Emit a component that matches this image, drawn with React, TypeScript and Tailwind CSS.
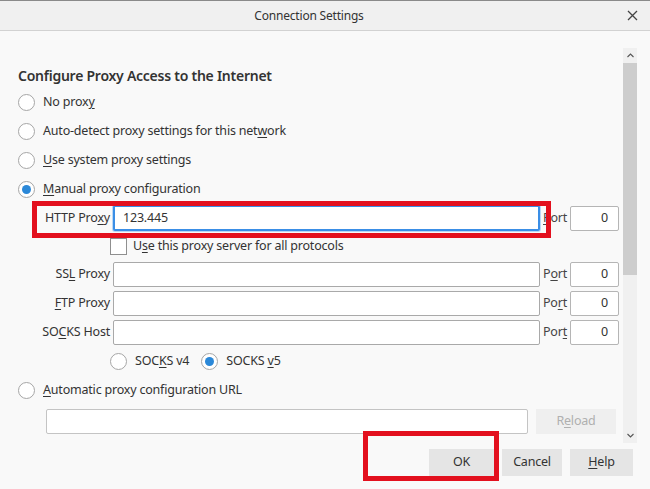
import React from 'react';

const font = { fontFamily: '"Noto Sans", "Open Sans", sans-serif' };

const Radio: React.FC<{ checked?: boolean }> = ({ checked }) => (
    <span className="flex h-[17px] w-[17px] shrink-0 items-center justify-center rounded-full border border-[#a6a6a6] bg-white">
        {checked && <span className="h-[9px] w-[9px] rounded-full bg-[#2b88d8]" />}
    </span>
);

const RadioRow: React.FC<{ checked?: boolean; children: React.ReactNode }> = ({ checked, children }) => (
    <div className="flex h-[29px] items-center gap-[8px]">
        <Radio checked={checked} />
        <span>{children}</span>
    </div>
);

const ProxyRow: React.FC<{ label: React.ReactNode; port: React.ReactNode; value?: string; focused?: boolean; className?: string }> = ({ label, port, value, focused, className }) => (
    <div className={`flex h-[25px] items-center ${className || ''}`}>
        <div className="w-[92px] text-right">{label}</div>
        <div
            className={
                focused
                    ? 'ml-[3px] flex h-[26px] w-[427px] items-center rounded-[2px] border-2 border-[#3a8ee6] bg-white pl-[8px] shadow-[0_0_0_1px_#b9d7f5]'
                    : 'ml-[3px] h-[25px] w-[427px] rounded-[2px] border border-[#a9a9a9] bg-white'
            }
        >
            {value}
        </div>
        <div className="w-[30px] pl-[3px] text-[#444]">{port}</div>
        <div className="flex h-[25px] w-[49px] items-center justify-end rounded-[2px] border border-[#b5b5b5] bg-white pr-[10px]">0</div>
    </div>
);

const App: React.FC = () => {
    return (
        <div className="relative flex h-[489px] w-[650px] flex-col overflow-hidden bg-[#f9f9f9] text-[12.5px] tracking-[-0.2px] text-[#333]" style={font}>
            {/* title bar */}
            <div className="flex h-[31px] shrink-0 items-center border-t border-b border-t-[#8a8a8a] border-b-[#d2d2d2] bg-[#f0f0f0]">
                <div className="flex-1 text-center text-[12px] text-[#333]">Connection Settings</div>
                <div className="flex w-[32px] items-center justify-center pr-[4px]">
                    <svg width="11" height="11" viewBox="0 0 11 11">
                        <path d="M1 1 L10 10 M10 1 L1 10" stroke="#444" strokeWidth="1.3" />
                    </svg>
                </div>
            </div>

            {/* scroll area */}
            <div className="flex h-[414px] shrink-0">
                <div className="flex-1 pl-[18px]">
                    <div className="mt-[35px] h-[20px] text-[14px] font-semibold leading-[20px] tracking-[-0.25px] text-[#333]">
                        Configure Proxy Access to the Internet
                    </div>
                    <div className="mt-[2px]">
                        <RadioRow>No prox<u className="underline-offset-2">y</u></RadioRow>
                        <RadioRow>Auto-detect proxy settings for this net<u className="underline-offset-2">w</u>ork</RadioRow>
                        <RadioRow><u className="underline-offset-2">U</u>se system proxy settings</RadioRow>
                        <RadioRow checked><u className="underline-offset-2">M</u>anual proxy configuration</RadioRow>
                    </div>

                    <ProxyRow
                        className="mt-[1px] h-[26px]"
                        focused
                        value="123.445"
                        label={<>HTTP Pro<u className="underline-offset-2">x</u>y</>}
                        port={<><u className="underline-offset-2">P</u>ort</>}
                    />

                    <div className="mt-[7px] flex h-[17px] items-center">
                        <span className="ml-[92px] h-[17px] w-[17px] border border-[#8f8f8f] bg-white" />
                        <span className="ml-[6px]">U<u className="underline-offset-2">s</u>e this proxy server for all protocols</span>
                    </div>

                    <ProxyRow
                        className="mt-[7px]"
                        label={<>SS<u className="underline-offset-2">L</u> Proxy</>}
                        port={<>P<u className="underline-offset-2">o</u>rt</>}
                    />
                    <ProxyRow
                        className="mt-[4px]"
                        label={<><u className="underline-offset-2">F</u>TP Proxy</>}
                        port={<>Po<u className="underline-offset-2">r</u>t</>}
                    />
                    <ProxyRow
                        className="mt-[4px]"
                        label={<>SO<u className="underline-offset-2">C</u>KS Host</>}
                        port={<>Por<u className="underline-offset-2">t</u></>}
                    />

                    <div className="mt-[8px] flex h-[17px] items-center">
                        <div className="ml-[92px] flex items-center gap-[8px]">
                            <Radio />
                            <span>SOC<u className="underline-offset-2">K</u>S v4</span>
                        </div>
                        <div className="ml-[12px] flex items-center gap-[8px]">
                            <Radio checked />
                            <span>SOCKS <u className="underline-offset-2">v</u>5</span>
                        </div>
                    </div>

                    <div className="mt-[12px] flex h-[17px] items-center gap-[8px]">
                        <Radio />
                        <span><u className="underline-offset-2">A</u>utomatic proxy configuration URL</span>
                    </div>

                    <div className="mt-[10px] flex h-[25px]">
                        <div className="ml-[28px] w-[482px] rounded-[2px] border border-[#c4c4c4] bg-white" />
                        <div className="ml-[8px] flex w-[80px] items-center justify-center bg-[#efefef] text-[#b0b0b0]">
                            R<u className="underline-offset-2">e</u>load
                        </div>
                    </div>
                </div>

                {/* scrollbar */}
                <div className="mr-[13px] mt-[17px] flex h-[395px] w-[14px] flex-col bg-[#f0f0f0]">
                    <div className="flex h-[15px] items-center justify-center">
                        <svg width="7" height="5" viewBox="0 0 7 5">
                            <path d="M0.5 4 L3.5 1 L6.5 4" stroke="#555" strokeWidth="1.1" fill="none" />
                        </svg>
                    </div>
                    <div className="h-[212px] bg-[#cdcdcd]" />
                    <div className="flex-1" />
                    <div className="flex h-[15px] items-center justify-center">
                        <svg width="7" height="5" viewBox="0 0 7 5">
                            <path d="M0.5 1 L3.5 4 L6.5 1" stroke="#555" strokeWidth="1.1" fill="none" />
                        </svg>
                    </div>
                </div>
            </div>

            {/* buttons */}
            <div className="flex justify-end gap-[8px] pr-[17px] pt-[4px]">
                <button className="h-[27px] w-[65px] bg-[#e5e5e5] text-[#333]">OK</button>
                <button className="h-[27px] w-[60px] bg-[#e5e5e5] text-[#333]">Cancel</button>
                <button className="h-[27px] w-[63px] bg-[#e5e5e5] text-[#333]"><u className="underline-offset-2">H</u>elp</button>
            </div>

            {/* red annotation boxes */}
            <div className="absolute left-[32px] top-[201px] h-[37px] w-[519px] border-[5px] border-[#e3101e]" />
            <div className="absolute left-[363px] top-[431px] h-[50px] w-[136px] border-[5px] border-[#e3101e]" />
        </div>
    );
};

export default App;
